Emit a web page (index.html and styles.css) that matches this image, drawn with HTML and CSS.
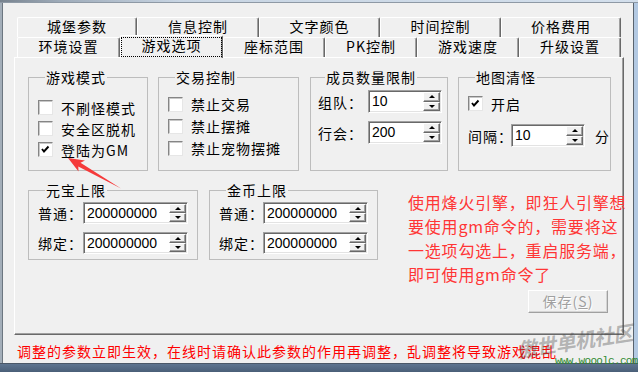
FILE: index.html
```html
<!DOCTYPE html>
<html lang="zh-CN">
<head>
<meta charset="utf-8">
<title>游戏选项</title>
<link rel="stylesheet" href="styles.css">
</head>
<body>
<div class="screen">
  <div class="frame-top"></div>
  <div class="frame-left"></div>
  <div class="client">
    <div class="tabctl">
      <div class="tabrow">
        <div class="tab w120">城堡参数</div>
        <div class="tab w122">信息控制</div>
        <div class="tab w121">文字颜色</div>
        <div class="tab w121">时间控制</div>
        <div class="tab w120">价格费用</div>
      </div>
      <div class="tabrow">
        <div class="tab w103">环境设置</div>
        <div class="tab w103 sel"><span class="focus">游戏选项</span></div>
        <div class="tab w102">座标范围</div>
        <div class="tab w92">PK控制</div>
        <div class="tab w102">游戏速度</div>
        <div class="tab w102">升级设置</div>
      </div>
      <div class="panel">
        <div class="row1">
          <fieldset class="grp g-mode">
            <legend>游戏模式</legend>
            <div class="chk"><span class="box"></span>不刷怪模式</div>
            <div class="chk"><span class="box"></span>安全区脱机</div>
            <div class="chk"><span class="box on"><svg viewBox="0 0 13 13" width="13" height="13"><polyline points="3,6 5,8.5 9.5,3.5" fill="none" stroke="#000" stroke-width="1.9"/></svg></span>登陆为GM</div>
          </fieldset>
          <fieldset class="grp g-trade">
            <legend>交易控制</legend>
            <div class="chk"><span class="box"></span>禁止交易</div>
            <div class="chk"><span class="box"></span>禁止摆摊</div>
            <div class="chk"><span class="box"></span>禁止宠物摆摊</div>
          </fieldset>
          <fieldset class="grp g-member">
            <legend>成员数量限制</legend>
            <div class="field">
              <span class="lbl l50">组队：</span>
              <div class="edit w74"><span class="val">10</span><span class="spin"><span class="sb up"></span><span class="sb dn"></span></span></div>
            </div>
            <div class="field next">
              <span class="lbl l50">行会：</span>
              <div class="edit w74"><span class="val">200</span><span class="spin"><span class="sb up"></span><span class="sb dn"></span></span></div>
            </div>
          </fieldset>
          <fieldset class="grp g-map">
            <legend>地图清怪</legend>
            <div class="chk"><span class="box on"><svg viewBox="0 0 13 13" width="13" height="13"><polyline points="3,6 5,8.5 9.5,3.5" fill="none" stroke="#000" stroke-width="1.9"/></svg></span>开启</div>
            <div class="field gap10">
              <span class="lbl l43">间隔：</span>
              <div class="edit w74"><span class="val">10</span><span class="spin"><span class="sb up"></span><span class="sb dn"></span></span></div>
              <span class="unit">分</span>
            </div>
          </fieldset>
        </div>
        <div class="row2">
          <fieldset class="grp g-yb">
            <legend>元宝上限</legend>
            <div class="field h22">
              <span class="lbl l45">普通：</span>
              <div class="edit w105 h22"><span class="val">200000000</span><span class="spin"><span class="sb up"></span><span class="sb dn"></span></span></div>
            </div>
            <div class="field h22 next">
              <span class="lbl l45">绑定：</span>
              <div class="edit w105 h22"><span class="val">200000000</span><span class="spin"><span class="sb up"></span><span class="sb dn"></span></span></div>
            </div>
          </fieldset>
          <fieldset class="grp g-jb">
            <legend>金币上限</legend>
            <div class="field h22">
              <span class="lbl l44">普通：</span>
              <div class="edit w105 h22"><span class="val">200000000</span><span class="spin"><span class="sb up"></span><span class="sb dn"></span></span></div>
            </div>
            <div class="field h22 next">
              <span class="lbl l44">绑定：</span>
              <div class="edit w105 h22"><span class="val">200000000</span><span class="spin"><span class="sb up"></span><span class="sb dn"></span></span></div>
            </div>
          </fieldset>
          <div class="note">使用烽火引擎，即狂人引擎想<br>要使用gm命令的，需要将这<br>一选项勾选上，重启服务端，<br>即可使用gm命令了</div>
        </div>
        <div class="btnrow"><button class="btn" disabled>保存(<u>S</u>)</button></div>
      </div>
    </div>
    <div class="footer">调整的参数立即生效，在线时请确认此参数的作用再调整，乱调整将导致游戏混乱</div>
  </div>
  <div class="frame-right"></div>
  <div class="frame-bottom"></div>

  <svg class="arrow" width="638" height="372" viewBox="0 0 638 372">
    <polygon points="68,158 85,160.5 80.5,162.8 121,188.5 78.3,166.5 78.5,171.5" fill="#f53a3a"/>
  </svg>
  <div class="wm">傲世单机社区</div>
  <div class="wm-url">www.wooolc.com</div>
</div>
</body>
</html>
```

FILE: styles.css
```css
* { box-sizing: border-box; }
html, body { margin: 0; padding: 0; }
body {
  width: 638px;
  height: 372px;
  overflow: hidden;
  background: #f0f0f0;
  font-family: "Noto Sans CJK SC", "Noto Sans", sans-serif;
  font-size: 14px;
  color: #000;
}
.screen {
  position: relative;
  width: 638px;
  height: 372px;
  display: grid;
  grid-template-columns: 3px 630px 5px;
  grid-template-rows: 3px 360px 9px;
}
.frame-top {
  grid-column: 1 / 4;
  background: linear-gradient(90deg, #77828e 0, #9eabb9 60px, #c8d5e3 180px, #d3dfec 100%);
  border-bottom: 1px solid #8e99a5;
}
.frame-left {
  background: #a3aeb9;
  border-right: 1px solid #6c7680;
}
.frame-right {
  background: linear-gradient(90deg, #59636e 0 1px, #b3c9e2 1px);
}
.frame-bottom {
  grid-column: 1 / 4;
  background: linear-gradient(#4b5868 0 1px, #5f7590 1px, #4a5f78 100%);
}
.client {
  background: #f0f0f0;
  padding: 14px 0 0 11px;
  overflow: hidden;
}

/* tabs */
.tabctl { width: 610px; }
.tabrow {
  display: flex;
  align-items: flex-end;
  height: 20px;
  padding-left: 3px;
}
.tab {
  flex: none;
  height: 20px;
  background: #f0f0f0;
  border-top: 1px solid #fff;
  border-left: 1px solid #fff;
  border-right: 1px solid #696969;
  box-shadow: inset -1px 0 #a0a0a0;
  border-radius: 2px 2px 0 0;
  text-align: center;
  line-height: 17px;
  letter-spacing: 1px;
  white-space: nowrap;
}
.tab.sel {
  position: relative;
  z-index: 2;
  height: 23px;
  margin-bottom: -1px;
}
.focus {
  display: block;
  margin-top: 1px;
  height: 20px;
  border: 1px dotted #000;
  line-height: 15px;
}
.w120 { width: 120px; }
.w121 { width: 121px; }
.w122 { width: 122px; }
.w103 { width: 103px; }
.w102 { width: 102px; }
.w92 { width: 92px; }

.panel {
  position: relative;
  height: 278px;
  border: 1px solid;
  border-color: #fff #696969 #696969 #fff;
  box-shadow: inset -1px -1px #a0a0a0;
  padding: 12px 0 0 13px;
}

/* groups */
.row1, .row2 { display: flex; align-items: flex-start; }
.row2 { margin-top: 12px; }
.grp {
  flex: none;
  margin: 0;
  padding: 0;
  min-width: 0;
  border: 1px solid #bdbdbd;
}
.grp legend {
  padding: 0 1px;
  margin-left: 7px;
  line-height: 14px;
  letter-spacing: 1px;
  white-space: nowrap;
}
.g-mode { width: 120px; height: 101px; padding: 13px 0 0 9px; }
.g-trade { width: 141px; height: 101px; margin-left: 10px; padding: 9px 0 0 9px; }
.g-trade .chk { height: 22px; }
.g-member { width: 138px; height: 101px; margin-left: 11px; padding: 6px 0 0 7px; }
.g-map { width: 153px; height: 101px; margin-left: 10px; padding: 9px 0 0 9px; }
.g-yb { width: 170px; height: 77px; padding: 5px 0 0 9px; }
.g-jb { width: 169px; height: 77px; margin-left: 11px; padding: 5px 0 0 9px; }

.chk {
  display: flex;
  align-items: center;
  height: 21px;
  letter-spacing: 1px;
  white-space: nowrap;
}
.box {
  flex: none;
  width: 15px;
  height: 15px;
  margin-right: 8px;
  background: #fff;
  border: 1px solid;
  border-color: #858585 #e6e6e6 #e6e6e6 #858585;
  box-shadow: inset 1px 1px #c8c8c8;
  display: flex;
}
.field {
  display: flex;
  align-items: center;
  height: 23px;
  white-space: nowrap;
}
.field.h22 { height: 22px; }
.field.next { margin-top: 8px; }
.field.gap10 { margin-top: 10px; }
.lbl { flex: none; letter-spacing: 1px; }
.l50 { width: 50px; }
.l45 { width: 45px; }
.l44 { width: 44px; }
.l43 { width: 43px; }
.unit { margin-left: 10px; }

.edit {
  flex: none;
  display: flex;
  height: 23px;
  background: #fff;
  border: 1px solid;
  border-color: #a0a0a0 #fff #fff #a0a0a0;
  box-shadow: inset 1px 1px #696969, inset -1px -1px #e3e3e3;
}
.edit.h22 { height: 22px; }
.w74 { width: 74px; }
.w105 { width: 105px; }
.val {
  flex: 1;
  padding: 1px 0 0 3px;
  font-family: "Liberation Sans", Arial, sans-serif;
  font-size: 14px;
  line-height: 19px;
}
.spin {
  flex: none;
  display: flex;
  flex-direction: column;
  width: 17px;
  margin: 1px 1px 1px 0;
}
.sb {
  flex: 1;
  display: flex;
  align-items: center;
  justify-content: center;
  background: #f0f0f0;
  border: 1px solid;
  border-color: #fff #696969 #696969 #fff;
  box-shadow: inset -1px -1px #a0a0a0;
}
.sb::before {
  content: "";
  width: 0;
  height: 0;
  border-left: 3px solid transparent;
  border-right: 3px solid transparent;
}
.sb.up::before { border-bottom: 3px solid #000; }
.sb.dn::before { border-top: 3px solid #000; }

/* annotation */
.note {
  flex: none;
  margin: 7px 0 0 30px;
  color: #ff3535;
  font-size: 16px;
  line-height: 24px;
  letter-spacing: 0.8px;
  white-space: nowrap;
}

.btnrow { margin-top: 4px; padding-left: 500px; }
.btn {
  width: 80px;
  height: 23px;
  padding: 0;
  background: #f0f0f0;
  border: 1px solid;
  border-color: #fff #a0a0a0 #a0a0a0 #fff;
  box-shadow: inset -1px -1px #d4d4d4;
  font-family: "Noto Sans CJK SC", "Noto Sans", sans-serif;
  font-size: 14px;
  letter-spacing: 1px;
  line-height: 19px;
  color: #a0a0a0;
  text-shadow: 1px 1px #fff;
}

.footer {
  margin: 8px 0 0 3px;
  color: #f00;
  line-height: 16px;
  letter-spacing: 1px;
  white-space: nowrap;
}

/* overlays */
.arrow {
  position: absolute;
  left: 0;
  top: 0;
  pointer-events: none;
  z-index: 5;
}
.wm {
  position: absolute;
  left: 516px;
  top: 326px;
  z-index: 6;
  font-size: 20px;
  font-weight: bold;
  font-style: italic;
  letter-spacing: -0.5px;
  color: rgba(80, 80, 80, 0.4);
  transform: rotate(-9deg);
  white-space: nowrap;
}
.wm-url {
  position: absolute;
  left: 555px;
  top: 356px;
  z-index: 6;
  font-family: "Liberation Mono", monospace;
  font-size: 11px;
  line-height: 11px;
  letter-spacing: -0.7px;
  color: #2f8a2f;
  white-space: nowrap;
}
```
